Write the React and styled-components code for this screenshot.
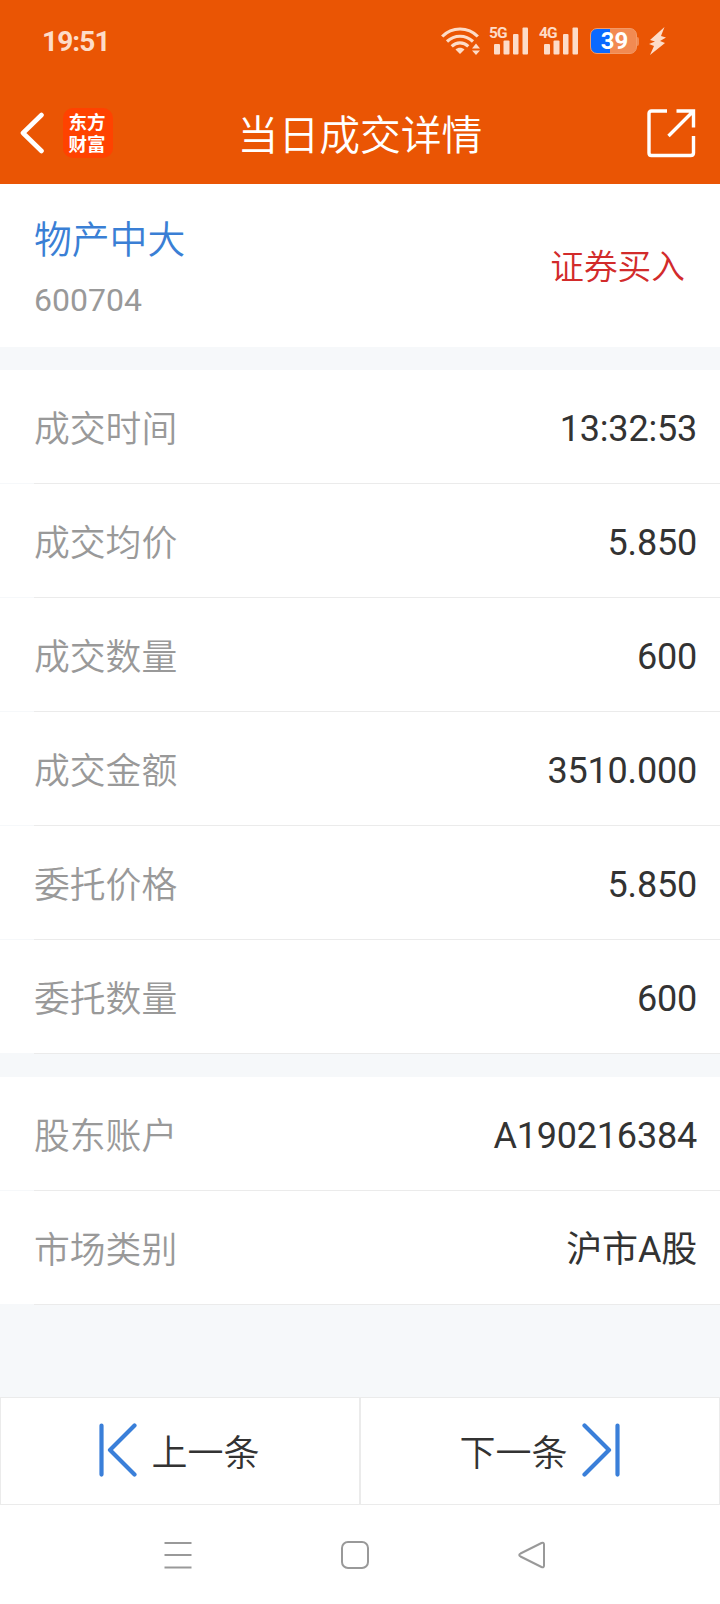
import React from 'react';
import styled, { createGlobalStyle } from 'styled-components';

const GlobalStyle = createGlobalStyle`
  *, *::before, *::after { box-sizing: border-box; }
  body { margin: 0; background: #fff; }
`;

const Screen = styled.div`
  width: 720px;
  height: 1604px;
  display: flex;
  flex-direction: column;
  background: #f6f8fa;
  font-family: Roboto, 'Noto Sans CJK SC', sans-serif;
  color: #333;
  overflow: hidden;
`;

const Header = styled.header`
  height: 184px;
  flex: none;
  background: #ea5504;
  color: #fff;
`;

const StatusBar = styled.div`
  height: 82px;
  display: flex;
  align-items: center;
  justify-content: space-between;
  padding: 0 54px 0 42px;
  color: #fddcc8;
`;

const Clock = styled.time`
  padding-top: 1px;
  font-size: 28px;
  font-weight: 700;
  letter-spacing: -0.9px;
  line-height: 32px;
`;

const StatusIcons = styled.div`
  display: flex;
  align-items: center;
  height: 30px;
`;

const Signal = styled.div`
  display: flex;
  align-items: flex-start;
  width: 40px;
  height: 28px;
  margin-left: ${(p) => p.$gap}px;
`;

const SignalText = styled.span`
  width: 0;
  white-space: nowrap;
  font-size: 15.5px;
  line-height: 13px;
  font-weight: 700;
  letter-spacing: -0.8px;
`;

const Battery = styled.div`
  display: flex;
  align-items: center;
  margin-left: 11px;
`;

const BatteryBody = styled.div`
  width: 47px;
  height: 26px;
  border: 1px solid #f39a67;
  border-radius: 7px;
  background: linear-gradient(to right, #0a69ff 19px, #f28a52 19px);
  color: #fff;
  font-size: 24px;
  font-weight: 700;
  line-height: 25px;
  text-align: center;
  padding-left: 2px;
`;

const BatteryTip = styled.div`
  width: 2px;
  height: 9px;
  border-radius: 0 2px 2px 0;
  background: #f28a52;
`;

const NavBar = styled.div`
  height: 102px;
  display: grid;
  grid-template-columns: 180px 1fr 180px;
  align-items: center;
`;

const NavLeft = styled.div`
  display: flex;
  align-items: center;
  gap: 19px;
  padding-left: 20px;
`;

const BrandLogo = styled.div`
  width: 50px;
  height: 50px;
  border-radius: 10px;
  background: #ff4200;
  display: flex;
  flex-direction: column;
  align-items: center;
  justify-content: center;
  padding: 1px 2px 0 0;
  font-size: 18.5px;
  font-weight: 700;
  line-height: 22px;
`;

const Title = styled.h1`
  margin: 0;
  padding-top: 6px;
  font-size: 40.8px;
  font-weight: 350;
  line-height: 54px;
  text-align: center;
  white-space: nowrap;
`;

const NavRight = styled.div`
  display: flex;
  justify-content: flex-end;
  padding-right: 24px;
`;

const Summary = styled.section`
  height: 163px;
  flex: none;
  display: flex;
  align-items: center;
  justify-content: space-between;
  padding: 2px 35px 0 34px;
  background: #fff;
`;

const StockName = styled.div`
  font-size: 37.8px;
  font-weight: 350;
  line-height: 54px;
  color: #3a7fd5;
`;

const StockCode = styled.div`
  margin-top: 13px;
  font-size: 32px;
  line-height: 40px;
  color: #999;
`;

const Side = styled.div`
  padding-top: 3px;
  font-size: 33.7px;
  font-weight: 350;
  line-height: 50px;
  color: #d22b2b;
`;

const Group = styled.section`
  flex: none;
  margin-top: ${(p) => p.$top}px;
`;

const Row = styled.div`
  height: 114px;
  display: flex;
  flex-direction: column;
`;

const RowBody = styled.div`
  height: 113px;
  display: flex;
  align-items: center;
  justify-content: space-between;
  padding: 5px 23px 0 34px;
  background: #fff;
  line-height: 54px;
`;

const Divider = styled.div`
  height: 1px;
  margin-left: 34px;
  background: #ebebeb;
`;

const Label = styled.span`
  padding-top: 1px;
  font-size: 35.8px;
  font-weight: 350;
  color: #999;
`;

const Value = styled.span`
  font-size: 36px;
  letter-spacing: -0.2px;
  color: #333;
`;

const Pager = styled.div`
  height: 108px;
  flex: none;
  display: flex;
  margin-top: auto;
`;

const PagerButton = styled.button`
  flex: 1;
  display: flex;
  align-items: center;
  justify-content: center;
  gap: 14px;
  padding: 0 1px 2px 0;
  border: 1px solid #ebebeb;
  background: #fff;
  color: #333;
  font: inherit;
  font-size: 36px;
  font-weight: 350;
  line-height: 54px;
`;

const PagerText = styled.span`
  padding-top: 7px;
`;

const SystemNav = styled.nav`
  height: 99px;
  flex: none;
  display: flex;
  align-items: center;
  justify-content: center;
  gap: 149px;
  padding-right: 10px;
  background: #fff;
`;

const WifiIcon = () => (
  <svg width="40" height="28" viewBox="0 0 40 28" fill="none" stroke="currentColor" strokeWidth="3.2">
    <path d="M1.2 9.5C11 -.5 27 -.5 36.8 9.5" />
    <path d="M6 14.5c7.5-7 18.500-7 26 0" />
    <path d="M10.700 19.300c4.800-4.500 11.800-4.500 16.600 0" />
    <path d="M14.500 22.500c2.500-2.300 6.500-2.300 9 0L19 27z" fill="currentColor" stroke="none" />
    <path d="M31 21.500l4-5 4 5zM31 23.500l4 4.500 4-4.500z" fill="currentColor" stroke="none" />
  </svg>
);

const SignalBars = () => (
  <svg width="40" height="28" viewBox="0 0 40 28" fill="currentColor">
    <rect x="5" y="17" width="6" height="10.500" rx="1" />
    <rect x="14.500" y="13.500" width="6" height="14" rx="1" />
    <rect x="24" y="7" width="5.500" height="20.500" rx="1" />
    <rect x="33.500" y="0.500" width="5.500" height="27" rx="1" />
  </svg>
);

const Bolt = styled.svg`
  margin-left: 10px;
`;

const BoltIcon = () => (
  <Bolt width="17" height="28" viewBox="0 0 17 28" fill="currentColor">
    <path d="M15.500 0L1 13l5 1.500L0 17l5 2L1 28l15-12-5-2L17 10.500l-5-1.500z" />
  </Bolt>
);

const BackIcon = () => (
  <svg width="24" height="42" viewBox="0 0 24 42" fill="none" stroke="#fff" strokeWidth="4.600" strokeLinecap="round" strokeLinejoin="round">
    <path d="M21.500 3L3 21l18.500 18" />
  </svg>
);

const ShareIcon = () => (
  <svg width="49" height="49" viewBox="0 0 49 49" fill="none" stroke="#fff" strokeWidth="3.400">
    <path d="M20 2H4.500Q2 2 2 4.500V44Q2 46.500 4.500 46.500H43.500Q46.500 46.500 46.500 44V27" />
    <path d="M29.500 2h17v16.500M46.500 2L21.500 27" />
  </svg>
);

const StepIcon = ({ flip }) => (
  <svg width="38" height="54" viewBox="0 0 38 54" fill="none" stroke="#3a7fd9" strokeWidth="4.200" strokeLinecap="round" strokeLinejoin="round">
    <g transform={flip ? 'translate(38 0) scale(-1 1)' : undefined}>
      <path d="M2.500 2.600v49M35.500 2.600L11 27l24.500 24.600" />
    </g>
  </svg>
);

const trade = [
  ['成交时间', '13:32:53'],
  ['成交均价', '5.850'],
  ['成交数量', '600'],
  ['成交金额', '3510.000'],
  ['委托价格', '5.850'],
  ['委托数量', '600'],
];

const account = [
  ['股东账户', 'A190216384'],
  ['市场类别', '沪市A股'],
];

const Rows = ({ items, top }) => (
  <Group $top={top}>
    {items.map(([label, value]) => (
      <Row key={label}>
        <RowBody>
          <Label>{label}</Label>
          <Value>{value}</Value>
        </RowBody>
        <Divider />
      </Row>
    ))}
  </Group>
);

export default function App() {
  return (
    <Screen>
      <GlobalStyle />
      <Header>
        <StatusBar>
          <Clock>19:51</Clock>
          <StatusIcons>
            <WifiIcon />
            <Signal $gap={8}>
              <SignalText>5G</SignalText>
              <SignalBars />
            </Signal>
            <Signal $gap={10}>
              <SignalText>4G</SignalText>
              <SignalBars />
            </Signal>
            <Battery>
              <BatteryBody>39</BatteryBody>
              <BatteryTip />
            </Battery>
            <BoltIcon />
          </StatusIcons>
        </StatusBar>
        <NavBar>
          <NavLeft>
            <BackIcon />
            <BrandLogo>
              <span>东方</span>
              <span>财富</span>
            </BrandLogo>
          </NavLeft>
          <Title>当日成交详情</Title>
          <NavRight>
            <ShareIcon />
          </NavRight>
        </NavBar>
      </Header>
      <Summary>
        <div>
          <StockName>物产中大</StockName>
          <StockCode>600704</StockCode>
        </div>
        <Side>证券买入</Side>
      </Summary>
      <Rows items={trade} top={23} />
      <Rows items={account} top={23} />
      <Pager>
        <PagerButton>
          <StepIcon />
          <PagerText>上一条</PagerText>
        </PagerButton>
        <PagerButton>
          <PagerText>下一条</PagerText>
          <StepIcon flip />
        </PagerButton>
      </Pager>
      <SystemNav>
        <svg width="28" height="28" viewBox="0 0 28 28" stroke="#999" strokeWidth="2">
          <path d="M.5 2h27M.5 14h27M.5 26.500h27" />
        </svg>
        <svg width="28" height="28" viewBox="0 0 28 28" fill="none" stroke="#999" strokeWidth="2">
          <rect x="1" y="1" width="26" height="26" rx="6" />
        </svg>
        <svg width="28" height="28" viewBox="0 0 28 28" fill="none" stroke="#999" strokeWidth="2" strokeLinejoin="round">
          <path d="M2.500 12.500L23.500 2Q26 1 26 3.500V24.500Q26 27 23.500 26L2.500 15.500Q0 14 2.500 12.500z" />
        </svg>
      </SystemNav>
    </Screen>
  );
}
